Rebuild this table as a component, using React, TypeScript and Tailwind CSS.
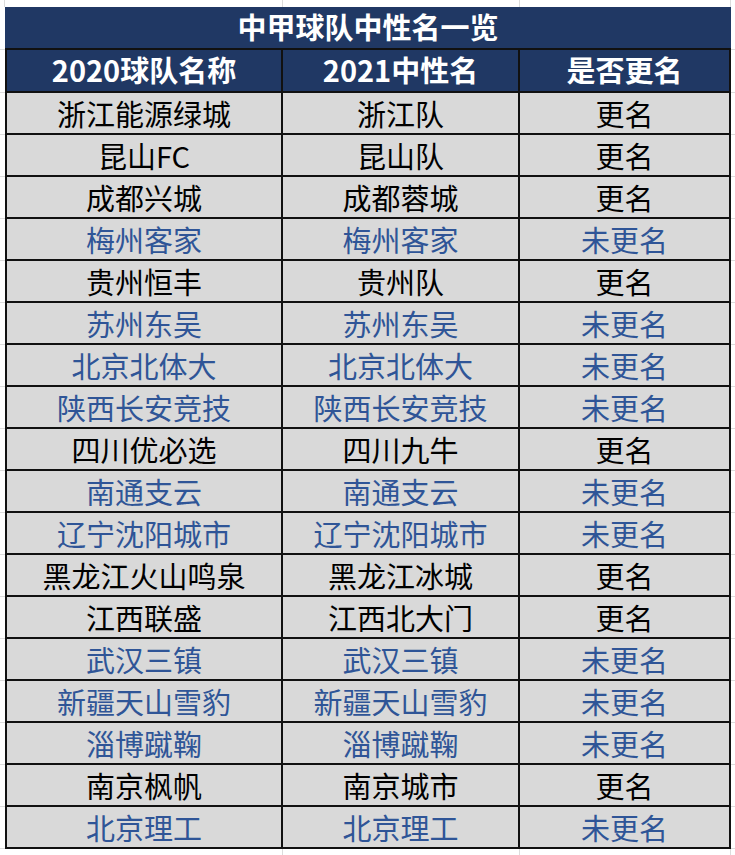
import React from "react";

type Row = { a: string; b: string; c: string; blue: boolean };

const rows: Row[] = [
  { a: "浙江能源绿城", b: "浙江队", c: "更名", blue: false },
  { a: "昆山FC", b: "昆山队", c: "更名", blue: false },
  { a: "成都兴城", b: "成都蓉城", c: "更名", blue: false },
  { a: "梅州客家", b: "梅州客家", c: "未更名", blue: true },
  { a: "贵州恒丰", b: "贵州队", c: "更名", blue: false },
  { a: "苏州东吴", b: "苏州东吴", c: "未更名", blue: true },
  { a: "北京北体大", b: "北京北体大", c: "未更名", blue: true },
  { a: "陕西长安竞技", b: "陕西长安竞技", c: "未更名", blue: true },
  { a: "四川优必选", b: "四川九牛", c: "更名", blue: false },
  { a: "南通支云", b: "南通支云", c: "未更名", blue: true },
  { a: "辽宁沈阳城市", b: "辽宁沈阳城市", c: "未更名", blue: true },
  { a: "黑龙江火山鸣泉", b: "黑龙江冰城", c: "更名", blue: false },
  { a: "江西联盛", b: "江西北大门", c: "更名", blue: false },
  { a: "武汉三镇", b: "武汉三镇", c: "未更名", blue: true },
  { a: "新疆天山雪豹", b: "新疆天山雪豹", c: "未更名", blue: true },
  { a: "淄博蹴鞠", b: "淄博蹴鞠", c: "未更名", blue: true },
  { a: "南京枫帆", b: "南京城市", c: "更名", blue: false },
  { a: "北京理工", b: "北京理工", c: "未更名", blue: true },
];

const font = "font-['Microsoft_YaHei','Noto_Sans_CJK_SC',sans-serif]";

export default function App() {
  return (
    <div className={`w-[735px] h-[855px] bg-white overflow-hidden ${font}`}>
      {/* top gridline strip */}
      <div className="flex h-[7px]">
        <div className="w-[5px] border-r border-[#dcdcdc]" />
        <div className="w-[278px] border-r border-[#dcdcdc]" />
        <div className="w-[237px] border-r border-[#dcdcdc]" />
        <div className="w-[211px] border-r border-[#dcdcdc]" />
      </div>
      <div className="flex">
        {/* left gridline strip */}
        <div className="w-[5px] flex flex-col">
          <div className="h-[43px] border-b border-[#dcdcdc]" />
          <div className="h-[43px] border-b border-[#dcdcdc]" />
          {rows.map((_, i) => (
            <div key={i} className="h-[42px] border-b border-[#dcdcdc]" />
          ))}
        </div>
        {/* table */}
        <div className="w-[726px] flex flex-col">
          <div className="h-[43px] bg-[#203864] border-b-2 border-[#111] flex items-center justify-center text-white font-bold text-[29px] leading-none pb-[2px]">
            中甲球队中性名一览
          </div>
          <div className="h-[43px] bg-[#203864] border-b-2 border-l-2 border-[#111] grid grid-cols-[276px_237px_211px] text-white font-bold text-[29px] leading-none">
            <div className="flex items-center justify-center border-r-2 border-[#111] pb-[2px]">2020球队名称</div>
            <div className="flex items-center justify-center border-r-2 border-[#111] pb-[2px]">2021中性名</div>
            <div className="flex items-center justify-center border-r-2 border-[#111] pb-[2px]">是否更名</div>
          </div>
          {rows.map((r, i) => (
            <div
              key={i}
              className={`h-[42px] bg-[#d9d9d9] border-b-2 border-l-2 border-[#111] grid grid-cols-[276px_237px_211px] text-[29px] leading-none ${
                r.blue ? "text-[#2f5597]" : "text-black"
              }`}
            >
              <div className="flex items-center justify-center border-r-2 border-[#111]">{r.a}</div>
              <div className="flex items-center justify-center border-r-2 border-[#111]">{r.b}</div>
              <div className="flex items-center justify-center border-r-2 border-[#111]">{r.c}</div>
            </div>
          ))}
          <div className="flex h-[6px]">
            <div className="w-[278px] border-r border-[#dcdcdc]" />
            <div className="w-[237px] border-r border-[#dcdcdc]" />
            <div className="w-[211px] border-r border-[#dcdcdc]" />
          </div>
        </div>
        <div className="w-[4px] flex flex-col">
          <div className="h-[43px] border-b border-[#dcdcdc]" />
          <div className="h-[43px] border-b border-[#dcdcdc]" />
          {rows.map((_, i) => (
            <div key={i} className="h-[42px] border-b border-[#dcdcdc]" />
          ))}
        </div>
      </div>
    </div>
  );
}
